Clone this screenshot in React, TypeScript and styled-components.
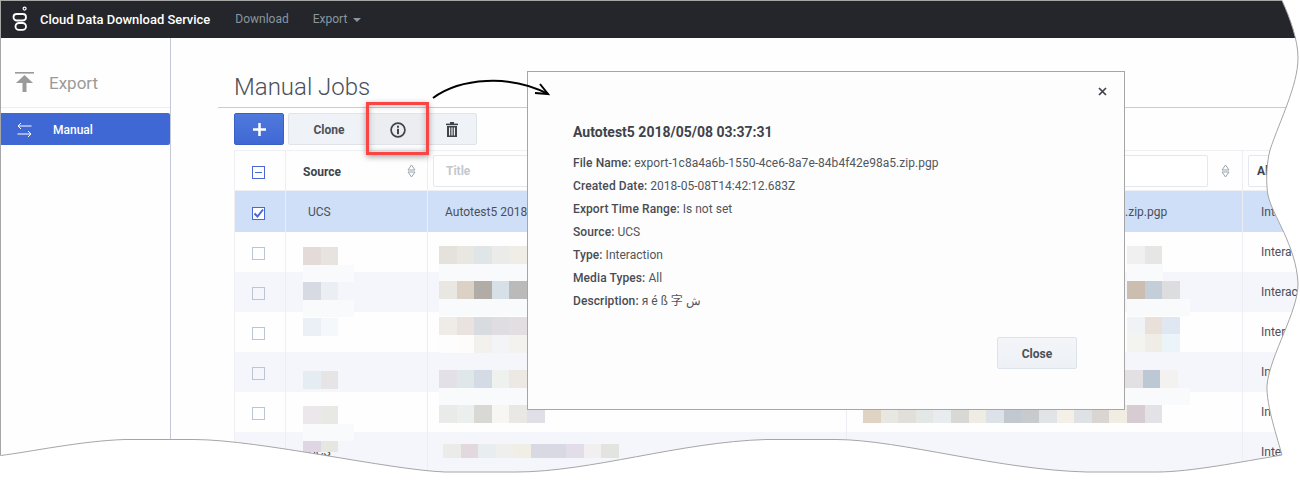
import React from 'react';
import styled, { createGlobalStyle } from 'styled-components';

const GlobalStyle = createGlobalStyle`
  html, body {
    margin: 0;
    padding: 0;
    background: #ffffff;
  }
  * {
    box-sizing: border-box;
  }
`;

const FONT = `Roboto, "Liberation Sans", "Noto Sans CJK SC", sans-serif`;

// outline of the torn-paper edge of the screenshot
const TORN_EDGE =
  'M0.5 0.5 H1282 C1290 18 1298 40 1298 58 C1298 85 1280 120 1270 150 C1266 165 1266 185 1268 195 ' +
  'C1272 215 1296 245 1298 283 C1299 310 1270 355 1267 385 C1266 405 1278 440 1282 455 ' +
  'C1240 462 1190 472 1157 472 L1087 472 C1000 470 900 440 837 439.5 L766 439.5 ' +
  'C680 442 590 472 516 472 L445 472 C390 470 260 440 195 439.5 L125 439.5 C80 441 30 452 0.5 455.5 Z';

type Patch = { left: number; top: number; colors: string[]; height?: number; pale?: number };

// pixelated (redacted) cell contents, one list per visible row, coordinates relative to the row
const redactions: Patch[][] = [
  [
    { left: 69, top: 15, colors: ['#e4dad8', '#e7e3de'], pale: 51 },
    { left: 205, top: 14, colors: ['#e5e2db', '#e8e7e2', '#e0e5e8', '#ebecea', '#f0ece6', '#ecebe8', '#e9e8e6', '#eeeeed', '#efefee'], pale: 150 },
    { left: 893, top: 14, colors: ['#f0f0f0', '#e6e6e4'], pale: 36 },
  ],
  [
    { left: 69, top: 10, colors: ['#d8dae3', '#ebeef3'], pale: 51 },
    { left: 205, top: 9, colors: ['#e8e7e2', '#dbd2c5', '#b2aca7', '#d7dfe7', '#bababa', '#e2dfdc', '#ece9e6'], pale: 150 },
    { left: 893, top: 9, colors: ['#cbbdb0', '#c4ced8', '#dddcde'], pale: 63 },
  ],
  [
    { left: 69, top: 6, colors: ['#ebf0f7', '#f4f8fb'] },
    { left: 205, top: 5, colors: ['#efebe6', '#e9e2df', '#d8dbe0', '#e0dde2', '#e2dee2', '#e8e6e2'] },
    { left: 205, top: 23, colors: ['#fdfdfd', '#fdfcfa', '#f3f1ee', '#f3f4f5', '#f3f2ee', '#f5f5f3'] },
    { left: 893, top: 5, colors: ['#f0f3f5', '#e8e0d9', '#dfe8f2'] },
    { left: 893, top: 22, colors: ['#f3f3f0', '#f0ece6', '#ebf4f9'] },
  ],
  [
    { left: 69, top: 19, colors: ['#e5edf3', '#e7e4e5'] },
    { left: 205, top: 18, colors: ['#e3e1e7', '#e0e7ea', '#d5dbe5', '#eff1ef', '#ece8e3', '#e8e5e5'], pale: 150 },
    { left: 891, top: 18, colors: ['#e2e0e2', '#bcc8d4', '#f4f2f0'], pale: 65 },
  ],
  [
    { left: 69, top: 14, colors: ['#ece7eb', '#e8e9e4'], pale: 51 },
    { left: 205, top: 13, colors: ['#e9ebe8', '#ebefee', '#d8d9d5', '#f7f6f3', '#e9e8e4', '#e0dfe7'] },
    {
      left: 629,
      top: 13,
      colors: [
        '#dfd3c3', '#e8e7e2', '#e0dfd9', '#e3e8e6', '#e8ecee', '#d8d8d5', '#efece5', '#dde1e8', '#c2c8cf',
        '#c8cbcd', '#e0e4e7', '#f4efe7', '#dfe2e4', '#d9d5d2', '#f1ede3', '#d8ccd3', '#e3e3e7',
      ],
    },
  ],
  [
    { left: 69, top: 9, height: 11, colors: ['#ded7e3', '#e6e7e1'] },
    {
      left: 209,
      top: 12,
      height: 14,
      colors: ['#ebebe9', '#e3d8de', '#e8eef0', '#eff0ee', '#f1eee6', '#d9d9e3', '#d9d9e3', '#e2dde9', '#f1eff0', '#e3e3df'],
    },
  ],
];

const Page = styled.div`
  position: relative;
  display: flex;
  flex-direction: column;
  width: 1300px;
  height: 481px;
  overflow: hidden;
  background: #fefefe;
  font-family: ${FONT};
  font-size: 12px;
  color: #4b5058;
`;

const NavBar = styled.header`
  display: flex;
  flex: none;
  align-items: center;
  height: 38px;
  padding-left: 12px;
  background: #24262b;
`;

const Brand = styled.span`
  margin-left: 12px;
  margin-right: 25px;
  color: #ffffff;
  font-size: 12.95px;
  font-weight: 500;
`;

const NavLink = styled.span`
  display: inline-flex;
  align-items: center;
  gap: 6px;
  margin-right: 24px;
  color: #8996a0;
  font-size: 12px;
`;

const Caret = styled.i`
  width: 0;
  height: 0;
  margin-top: 2px;
  border-left: 4px solid transparent;
  border-right: 4px solid transparent;
  border-top: 4px solid #8996a0;
`;

const Body = styled.div`
  display: flex;
  flex: 1;
  min-height: 0;
`;

const Sidebar = styled.aside`
  flex: none;
  width: 171px;
  border-right: 1px solid #c3c9d6;
`;

const SideHeader = styled.div`
  display: flex;
  align-items: center;
  height: 70px;
  padding: 18px 0 0 15px;
  border-bottom: 1px solid #eceef3;
  color: #9a9a9a;
  font-size: 17px;
`;

const SideTitle = styled.span`
  margin-left: 15px;
  margin-top: 3px;
`;

const SideItem = styled.div`
  display: flex;
  align-items: center;
  height: 32px;
  margin: 5px 0 0 0;
  padding: 1px 0 0 17px;
  border-radius: 0 2px 2px 0;
  background: #3f68d4;
  color: #ffffff;
  font-weight: 500;
`;

const SideItemLabel = styled.span`
  margin-left: 21px;
`;

const Main = styled.main`
  flex: 1;
  min-width: 0;
  padding-left: 47px;
`;

const Heading = styled.div`
  display: flex;
  align-items: flex-end;
  height: 70px;
  padding: 0 0 5px 16px;
  border-bottom: 1px solid #c9ccd4;
`;

const Title = styled.h1`
  margin: 0;
  color: #4b5058;
  font-size: 24px;
  font-weight: 300;
  line-height: 30px;
`;

const Toolbar = styled.div`
  display: flex;
  gap: 4px;
  height: 32px;
  margin: 5px 0 5px 16px;
`;

const AddButton = styled.button`
  display: flex;
  align-items: center;
  justify-content: center;
  width: 50px;
  padding: 0;
  border: 1px solid #3a60c4;
  border-radius: 2px;
  background: linear-gradient(#5079dd, #3f68d4);
`;

const ButtonGroup = styled.div`
  display: flex;
  gap: 4px;
  width: 189px;
  border: 1px solid #dfe4ea;
  border-radius: 2px;
  background: #eff2f6;
`;

const GroupButton = styled.button<{ $width: number; $active?: boolean }>`
  display: flex;
  flex: none;
  align-items: center;
  justify-content: center;
  width: ${props => props.$width}px;
  padding: 1px 0 0;
  border: 0;
  background: ${props => (props.$active ? '#ebedf0' : 'transparent')};
  color: #4b5058;
  font-family: ${FONT};
  font-size: 12px;
  font-weight: 700;
`;

const Table = styled.div`
  width: 1100px;
  margin-left: 16px;
  border-top: 1px solid #eef0f3;
  border-left: 1px solid #eef0f3;
`;

const Row = styled.div<{ $height: number; $bg?: string }>`
  display: grid;
  grid-template-columns: 51px 142px 419px 396px 100px;
  height: ${props => props.$height}px;
  background: ${props => props.$bg || 'transparent'};
`;

const Cell = styled.div<{ $pad?: number; $center?: boolean }>`
  position: relative;
  display: flex;
  align-items: center;
  justify-content: ${props => (props.$center ? 'center' : 'flex-start')};
  padding-left: ${props => props.$pad ?? 0}px;
  border-right: 1px solid #eceef3;
  white-space: nowrap;
`;

const HeaderCell = styled(Cell)<{ $right?: number }>`
  gap: 13px;
  border-bottom: 1px solid #eef0f3;
  padding-right: ${props => props.$right ?? 12}px;
  font-weight: 700;
`;

const HeaderLabel = styled.span`
  flex: 1;
  margin-top: 2px;
  color: #3f434a;
`;

const FilterInput = styled.div<{ $color?: string; $text?: number }>`
  display: flex;
  flex: 1;
  align-items: center;
  height: 32px;
  padding-left: ${props => props.$text ?? 12}px;
  border: 1px solid #e3e8f0;
  border-radius: 2px;
  background: #ffffff;
  color: ${props => props.$color || '#c4c8ce'};
  font-weight: 700;
`;

const Box = styled.span<{ $on?: boolean }>`
  display: flex;
  align-items: center;
  justify-content: center;
  width: 13px;
  height: 13px;
  margin: 3px 3px 0 0;
  border: 1px solid ${props => (props.$on ? '#4a67d6' : '#bcc6d2')};
  background: ${props => (props.$on ? '#ffffff' : 'transparent')};
`;

const Redaction = styled.div<{ $left: number; $top: number; $height: number }>`
  position: absolute;
  top: ${props => props.$top}px;
  left: ${props => props.$left}px;
  display: flex;
  height: ${props => props.$height}px;
`;

const Swatch = styled.i<{ $color: string }>`
  flex: none;
  width: 17.6px;
  background: ${props => props.$color};
`;

const PaleBand = styled.div<{ $left: number; $top: number; $width: number }>`
  position: absolute;
  top: ${props => props.$top}px;
  left: ${props => props.$left}px;
  width: ${props => props.$width}px;
  height: 17px;
  background: #f9fafc;
`;

const RowLayer = styled.div<{ $top: number }>`
  position: absolute;
  top: ${props => props.$top}px;
  left: 0;
  width: 100%;
`;

const Modal = styled.section`
  position: absolute;
  top: 71px;
  left: 527px;
  width: 598px;
  height: 339px;
  padding: 51px 45px 0;
  border: 1px solid #a6a6a6;
  background: #fdfdfd;
`;

const ModalClose = styled.span`
  position: absolute;
  top: 15px;
  right: 17px;
  display: flex;
`;

const ModalTitle = styled.h2`
  margin: 0 0 11px;
  color: #3f434a;
  font-size: 14px;
  font-weight: 700;
  line-height: 18px;
`;

const Detail = styled.div`
  height: 23px;
  line-height: 23px;
  color: #51565e;
  letter-spacing: 0.02px;
`;

const DetailLabel = styled.b`
  color: #484c54;
  font-weight: 500;
  letter-spacing: 0.1px;
`;

const CloseButton = styled.button`
  position: absolute;
  right: 47px;
  bottom: 40px;
  width: 80px;
  height: 32px;
  padding: 1px 0 0;
  border: 1px solid #dde3ea;
  border-radius: 2px;
  background: linear-gradient(#f3f5f8, #edf1f6);
  color: #4b5058;
  font-family: ${FONT};
  font-size: 12px;
  font-weight: 700;
`;

const Callout = styled.div`
  position: absolute;
  top: 102px;
  left: 366px;
  width: 63px;
  height: 53px;
  border: 3px solid #fb4444;
  box-shadow: 0 2px 6px rgba(0, 0, 0, 0.35), inset 0 0 6px rgba(0, 0, 0, 0.3);
`;

const Overlay = styled.svg`
  position: absolute;
  top: 0;
  left: 0;
  pointer-events: none;
`;

const Logo = () => (
  <svg width="16" height="26" viewBox="0 0 16 26" fill="none" stroke="#fff" strokeWidth="1.8">
    <circle cx="12.6" cy="2.6" r="1.5" strokeWidth="1.2" />
    <rect x="1.5" y="8" width="12.5" height="6.5" rx="3.2" />
    <rect x="3.5" y="17" width="10.5" height="6.8" rx="3.4" />
  </svg>
);

const ExportIcon = () => (
  <svg width="19" height="20" viewBox="0 0 19 20" fill="#9a9a9a">
    <rect x="0" y="0" width="19" height="1.6" />
    <path d="M9.5 3 L18 11 H11.5 V20 H7.5 V11 H1 Z" />
  </svg>
);

const SwapIcon = () => (
  <svg width="15" height="16" viewBox="0 0 15 16" fill="none" stroke="#fff" strokeWidth="1">
    <path d="M14.5 4 H1 M4 1 L1 4 L4 7" />
    <path d="M0.5 12 H14 M11 9 L14 12 L11 15" />
  </svg>
);

const PlusIcon = () => (
  <svg width="13" height="13" viewBox="0 0 13 13" fill="#fff">
    <rect x="5.25" y="0" width="2.5" height="13" />
    <rect x="0" y="5.25" width="13" height="2.5" />
  </svg>
);

const InfoIcon = () => (
  <svg width="16" height="16" viewBox="0 0 16 16" fill="none">
    <circle cx="8" cy="8" r="6.9" stroke="#3f434a" strokeWidth="1.7" />
    <rect x="7" y="3.7" width="2" height="2" fill="#3f434a" />
    <rect x="7" y="6.8" width="2" height="5.4" fill="#3f434a" />
  </svg>
);

const TrashIcon = () => (
  <svg width="12" height="15" viewBox="0 0 12 15" fill="#3f434a">
    <rect x="0" y="1.6" width="12" height="1.6" />
    <rect x="4" y="0" width="4" height="2" />
    <path d="M1 4 H11 V15 H1 Z M3 5.5 V13.5 H4.2 V5.5 Z M5.4 5.5 V13.5 H6.6 V5.5 Z M7.8 5.5 V13.5 H9 V5.5 Z" fillRule="evenodd" />
  </svg>
);

const SortIcon = () => (
  <svg width="9" height="14" viewBox="0 0 9 14" fill="none" stroke="#9aa3ad" strokeWidth="1">
    <path d="M4.5 1 L8 6 H1 Z" />
    <path d="M4.5 13 L8 8 H1 Z" />
  </svg>
);

const CloseIcon = () => (
  <svg width="9" height="9" viewBox="0 0 9 9" stroke="#3f434a" strokeWidth="1.7">
    <path d="M1 1 L8 8 M8 1 L1 8" />
  </svg>
);

const MinusMark = () => (
  <svg width="9" height="9" viewBox="0 0 9 9" stroke="#4a67d6" strokeWidth="1">
    <path d="M1 4.5 H8" />
  </svg>
);

const CheckMark = () => (
  <svg width="11" height="11" viewBox="0 0 11 11" fill="none" stroke="#4a67d6" strokeWidth="2">
    <path d="M1.5 5.5 L4.5 8.5 L10 1.5" />
  </svg>
);

const details: [string, string][] = [
  ['File Name:', 'export-1c8a4a6b-1550-4ce6-8a7e-84b4f42e98a5.zip.pgp'],
  ['Created Date:', '2018-05-08T14:42:12.683Z'],
  ['Export Time Range:', 'Is not set'],
  ['Source:', 'UCS'],
  ['Type:', 'Interaction'],
  ['Media Types:', 'All'],
  ['Description:', 'я é ß 字 ش'],
];

function App() {
  return (
    <Page>
      <GlobalStyle />
      <NavBar>
        <Logo />
        <Brand>Cloud Data Download Service</Brand>
        <NavLink>Download</NavLink>
        <NavLink>
          Export <Caret />
        </NavLink>
      </NavBar>
      <Body>
        <Sidebar>
          <SideHeader>
            <ExportIcon />
            <SideTitle>Export</SideTitle>
          </SideHeader>
          <SideItem>
            <SwapIcon />
            <SideItemLabel>Manual</SideItemLabel>
          </SideItem>
        </Sidebar>
        <Main>
          <Heading>
            <Title>Manual Jobs</Title>
          </Heading>
          <Toolbar>
            <AddButton aria-label="Add">
              <PlusIcon />
            </AddButton>
            <ButtonGroup>
              <GroupButton $width={80}>Clone</GroupButton>
              <GroupButton $width={50} $active aria-label="Info">
                <InfoIcon />
              </GroupButton>
              <GroupButton $width={49} aria-label="Delete">
                <TrashIcon />
              </GroupButton>
            </ButtonGroup>
          </Toolbar>
          <Table>
            <Row $height={40}>
              <HeaderCell $center $right={0}>
                <Box $on>
                  <MinusMark />
                </Box>
              </HeaderCell>
              <HeaderCell $pad={17} $right={11}>
                <HeaderLabel>Source</HeaderLabel>
                <SortIcon />
              </HeaderCell>
              <HeaderCell $pad={5}>
                <FilterInput>Title</FilterInput>
                <SortIcon />
              </HeaderCell>
              <HeaderCell $pad={5}>
                <FilterInput />
                <SortIcon />
              </HeaderCell>
              <HeaderCell $pad={5}>
                <FilterInput $color="#3f434a" $text={8}>All</FilterInput>
              </HeaderCell>
            </Row>
            <Row $height={41} $bg="#cfdff7">
              <Cell $center>
                <Box $on>
                  <CheckMark />
                </Box>
              </Cell>
              <Cell $pad={22}>UCS</Cell>
              <Cell $pad={17}>Autotest5 2018/05/08 03:37:31</Cell>
              <Cell $pad={17}>export-1c8a4a6b-1550-4ce6-8a7e-84b4f42e98a5.zip.pgp</Cell>
              <Cell $pad={18}>Interaction</Cell>
            </Row>
            {redactions.map((_, i) => (
              <Row key={i} $height={40} $bg={i % 2 === 1 ? '#f5f6fb' : undefined}>
                <Cell $center>
                  <Box />
                </Cell>
                <Cell $pad={22}>{i === 5 ? 'UCS' : ''}</Cell>
                <Cell />
                <Cell />
                <Cell $pad={18}>Interaction</Cell>
              </Row>
            ))}
          </Table>
        </Main>
      </Body>
      {redactions.map((patches, i) => (
        <RowLayer key={i} $top={232 + i * 40}>
          {patches.map((p, j) => (
            <React.Fragment key={j}>
              {p.pale ? <PaleBand $left={234 + p.left} $top={p.top + 18} $width={p.pale} /> : null}
              <Redaction $left={234 + p.left} $top={p.top} $height={p.height ?? 18}>
                {p.colors.map((c, k) => (
                  <Swatch key={k} $color={c} />
                ))}
              </Redaction>
            </React.Fragment>
          ))}
        </RowLayer>
      ))}
      <Callout />
      <Modal>
        <ModalClose>
          <CloseIcon />
        </ModalClose>
        <ModalTitle>Autotest5 2018/05/08 03:37:31</ModalTitle>
        {details.map(([label, value]) => (
          <Detail key={label}>
            <DetailLabel>{label}</DetailLabel> {value}
          </Detail>
        ))}
        <CloseButton>Close</CloseButton>
      </Modal>
      <Overlay width="1300" height="481" viewBox="0 0 1300 481">
        <path d="M433 98 C460 78 510 74 548 94" fill="none" stroke="#000" strokeWidth="2" />
        <path d="M540 84 L548 94 L535 93" fill="none" stroke="#000" strokeWidth="2" />
        <path d={`M0 0 H1300 V481 H0 Z ${TORN_EDGE}`} fill="#ffffff" fillRule="evenodd" />
        <path d={TORN_EDGE} fill="none" stroke="#a6a6a6" strokeWidth="1" />
      </Overlay>
    </Page>
  );
}

export default App;
